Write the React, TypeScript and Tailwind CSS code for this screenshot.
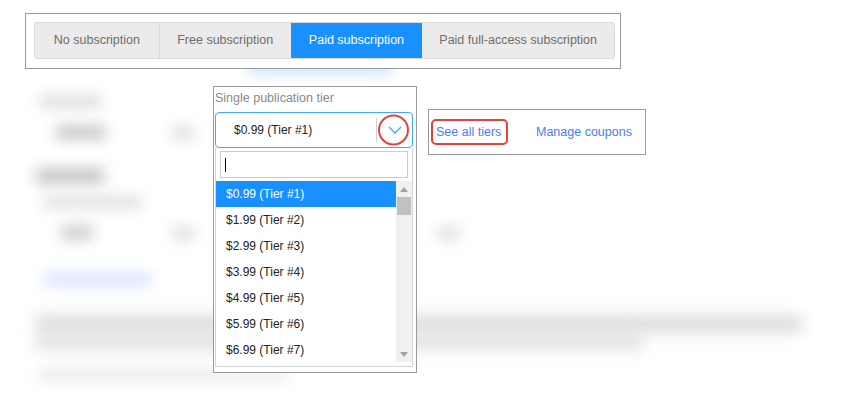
import React from 'react';

const tabs = [
  { label: 'No subscription', w: 'w-[124px]' },
  { label: 'Free subscription', w: 'w-[132px]' },
  { label: 'Paid subscription', w: 'w-[132px]', active: true },
  { label: 'Paid full-access subscription', w: 'w-[192px]' },
];

const tiers = [
  '$0.99 (Tier #1)',
  '$1.99 (Tier #2)',
  '$2.99 (Tier #3)',
  '$3.99 (Tier #4)',
  '$4.99 (Tier #5)',
  '$5.99 (Tier #6)',
  '$6.99 (Tier #7)',
];

// blurred page that sits behind the callouts
const BlurredPage: React.FC = () => (
  <div className="flex flex-col pt-[60px]">
    <div className="ml-[248px] h-[14px] w-[144px] rounded-full bg-[#c8e2ff] blur-[7px]" />
    <div className="ml-[40px] mt-[22px] h-[11px] w-[62px] bg-[#d8d8d8] blur-[7px]" />
    <div className="mt-[18px] flex items-center">
      <div className="ml-[56px] h-[15px] w-[50px] bg-[#cbcbcb] blur-[7px]" />
      <div className="ml-[66px] h-[14px] w-[22px] bg-[#e0e0e0] blur-[7px]" />
    </div>
    <div className="ml-[36px] mt-[28px] h-[16px] w-[68px] bg-[#c6c6c6] blur-[7px]" />
    <div className="ml-[43px] mt-[12px] h-[12px] w-[99px] bg-[#dedede] blur-[7px]" />
    <div className="mt-[17px] flex items-center">
      <div className="ml-[61px] h-[15px] w-[32px] bg-[#cfcfcf] blur-[7px]" />
      <div className="ml-[79px] h-[14px] w-[22px] bg-[#e0e0e0] blur-[7px]" />
      <div className="ml-[244px] h-[14px] w-[22px] bg-[#e0e0e0] blur-[7px]" />
    </div>
    <div className="ml-[43px] mt-[33px] h-[13px] w-[109px] bg-[#d6e5ff] blur-[7px]" />
    <div className="ml-[36px] mt-[30px] h-[16px] w-[766px] bg-[#d8d8d8] blur-[8px]" />
    <div className="ml-[36px] mt-[3px] h-[14px] w-[606px] bg-[#dcdcdc] blur-[8px]" />
    <div className="ml-[38px] mt-[20px] h-[12px] w-[249px] bg-[#eaeaea] blur-[7px]" />
  </div>
);

const Triangle: React.FC<{ up?: boolean }> = ({ up }) => (
  <svg width="8" height="5" viewBox="0 0 8 5">
    <polygon points={up ? '0,5 8,5 4,0' : '0,0 8,0 4,5'} fill="#a3a3a3" />
  </svg>
);

export default function App() {
  return (
    <div className="relative h-[397px] w-[848px] overflow-hidden bg-white font-['Liberation_Sans',Arial,sans-serif]">
      <BlurredPage />

      {/* subscription tabs */}
      <div className="absolute left-[25px] top-[13px] h-[56px] w-[596px] border border-[#9a9a9a] bg-white pl-[8px] pt-[8px]">
        <div className="flex h-[37px] w-[581px] overflow-hidden rounded-[3px] border border-[#dadada] bg-[#ebebeb]">
          {tabs.map((t, i) => (
            <div
              key={t.label}
              className={`flex ${t.w} items-center justify-center text-[12.5px] ${
                t.active ? 'bg-[#1890ff] text-white' : 'text-[#6e6e6e]'
              } ${i > 0 && !t.active && !tabs[i - 1].active ? 'border-l border-[#d9d9d9]' : ''}`}
            >
              {t.label}
            </div>
          ))}
        </div>
      </div>

      {/* tier dropdown */}
      <div className="absolute left-[213px] top-[86px] h-[287px] w-[204px] border border-[#9a9a9a] bg-white pl-[1px]">
        <div className="pt-[3px] text-[12.5px] leading-[16px] text-[#8a8a8a]">Single publication tier</div>
        <div className="mt-[6px] flex h-[36px] w-[198px] items-center rounded-[4px] border border-[#40a9ff]">
          <span className="flex-1 pl-[18px] text-[12px] text-[#222]">$0.99 (Tier #1)</span>
          <div className="h-[24px] w-px bg-[#cfcfcf]" />
          <div className="relative flex w-[35px] items-center justify-center">
            <svg width="14" height="8" viewBox="0 0 14 8">
              <polyline points="1,1 7,7 13,1" fill="none" stroke="#40a9ff" strokeWidth="1.3" />
            </svg>
            <div className="absolute left-[1px] top-1/2 h-[31px] w-[31px] -translate-y-1/2 rounded-full border-2 border-[#e0443c]" />
          </div>
        </div>
        <div className="flex h-[219px] w-[198px] flex-col border border-t-0 border-[#d0d6da]">
          <div className="mx-[4px] mt-[3px] flex h-[27px] items-center border border-[#cccccc] pl-[4px]">
            <div className="h-[14px] w-px bg-black" />
          </div>
          <div className="mt-[3px] flex">
            <div className="flex w-[180px] flex-col">
              {tiers.map((t, i) => (
                <div
                  key={t}
                  className={`flex h-[26px] items-center pl-[10px] text-[12px] ${
                    i === 0 ? 'bg-[#1890ff] text-white' : 'text-[#222]'
                  }`}
                >
                  {t}
                </div>
              ))}
            </div>
            <div className="flex h-[181px] w-[16px] flex-col bg-[#f0f0f0]">
              <div className="flex h-[16px] items-center justify-center">
                <Triangle up />
              </div>
              <div className="mx-[1px] h-[18px] bg-[#c1c1c1]" />
              <div className="flex-1" />
              <div className="flex h-[16px] items-center justify-center">
                <Triangle />
              </div>
            </div>
          </div>
        </div>
      </div>

      {/* links */}
      <div className="absolute left-[428px] top-[109px] flex h-[46px] w-[218px] items-center border border-[#9a9a9a] bg-white pl-[2px]">
        <div className="flex h-[26px] w-[77px] items-center rounded-[5px] border-2 border-[#e0443c] pl-[3px] text-[12.5px] text-[#4c7cf4]">
          See all tiers
        </div>
        <span className="ml-[28px] text-[12.5px] text-[#4c7cf4]">Manage coupons</span>
      </div>
    </div>
  );
}
